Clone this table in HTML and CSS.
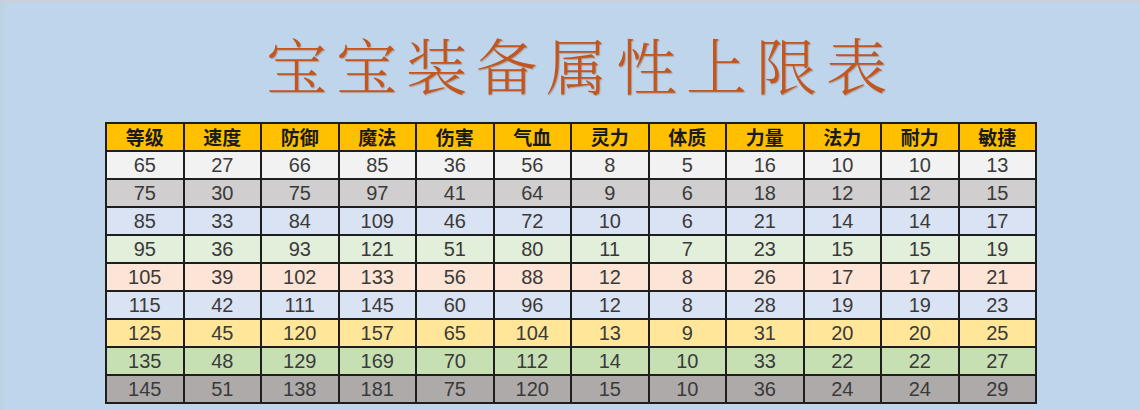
FILE: index.html
```html
<!DOCTYPE html>
<html lang="zh">
<head>
<meta charset="utf-8">
<link rel="stylesheet" href="styles.css">
</head>
<body>
<div class="page">
  <h1 class="title">宝宝装备属性上限表</h1>
  <table class="grid">
    <thead>
      <tr><th>等级</th><th>速度</th><th>防御</th><th>魔法</th><th>伤害</th><th>气血</th><th>灵力</th><th>体质</th><th>力量</th><th>法力</th><th>耐力</th><th>敏捷</th></tr>
    </thead>
    <tbody>
      <tr class="r1"><td>65</td><td>27</td><td>66</td><td>85</td><td>36</td><td>56</td><td>8</td><td>5</td><td>16</td><td>10</td><td>10</td><td>13</td></tr>
      <tr class="r2"><td>75</td><td>30</td><td>75</td><td>97</td><td>41</td><td>64</td><td>9</td><td>6</td><td>18</td><td>12</td><td>12</td><td>15</td></tr>
      <tr class="r3"><td>85</td><td>33</td><td>84</td><td>109</td><td>46</td><td>72</td><td>10</td><td>6</td><td>21</td><td>14</td><td>14</td><td>17</td></tr>
      <tr class="r4"><td>95</td><td>36</td><td>93</td><td>121</td><td>51</td><td>80</td><td>11</td><td>7</td><td>23</td><td>15</td><td>15</td><td>19</td></tr>
      <tr class="r5"><td>105</td><td>39</td><td>102</td><td>133</td><td>56</td><td>88</td><td>12</td><td>8</td><td>26</td><td>17</td><td>17</td><td>21</td></tr>
      <tr class="r6"><td>115</td><td>42</td><td>111</td><td>145</td><td>60</td><td>96</td><td>12</td><td>8</td><td>28</td><td>19</td><td>19</td><td>23</td></tr>
      <tr class="r7"><td>125</td><td>45</td><td>120</td><td>157</td><td>65</td><td>104</td><td>13</td><td>9</td><td>31</td><td>20</td><td>20</td><td>25</td></tr>
      <tr class="r8"><td>135</td><td>48</td><td>129</td><td>169</td><td>70</td><td>112</td><td>14</td><td>10</td><td>33</td><td>22</td><td>22</td><td>27</td></tr>
      <tr class="r9"><td>145</td><td>51</td><td>138</td><td>181</td><td>75</td><td>120</td><td>15</td><td>10</td><td>36</td><td>24</td><td>24</td><td>29</td></tr>
    </tbody>
  </table>
</div>
</body>
</html>
```

FILE: styles.css
```css
html, body {
  margin: 0;
  padding: 0;
}
body {
  width: 1140px;
  height: 410px;
  overflow: hidden;
  background: #bed5ec;
}
.page {
  box-sizing: border-box;
  height: 410px;
  border-top: 3px solid #c9d2dc;
  border-left: 4px solid #bcd3e4;
  padding-top: 27px;
}
.title {
  margin: 0;
  text-align: center;
  font-family: "AR PL UKai CN", "Noto Serif CJK SC", "Noto Sans CJK SC", serif;
  font-weight: 300;
  font-size: 61px;
  line-height: 68px;
  letter-spacing: 9px;
  color: #c2561f;
  text-shadow: 1px 1px 1px rgba(140, 60, 20, 0.35);
  padding-left: 18px;
}
.grid {
  margin: 24px 0 0 101px;
  border-collapse: collapse;
  table-layout: fixed;
  width: 930px;
  border: 2px solid #1e1e1e;
}
.grid th, .grid td {
  width: 77.5px;
  padding: 0;
  text-align: center;
  border: 2px solid #1e1e1e;
  box-sizing: border-box;
}
.grid th {
  height: 28px;
  background: #ffc000;
  font-family: "Noto Sans CJK SC", sans-serif;
  font-weight: 700;
  font-size: 19px;
  color: #1a1a1a;
  line-height: 26px;
}
.grid td {
  height: 28px;
  font-family: "Liberation Sans", "Noto Sans CJK SC", sans-serif;
  font-size: 20px;
  color: #3a3a3a;
  line-height: 26px;
}
.r1 td { background: #f2f2f2; }
.r2 td { background: #d0cece; }
.r3 td { background: #dae3f3; }
.r4 td { background: #e2efda; }
.r5 td { background: #fce4d6; }
.r6 td { background: #dae3f3; }
.r7 td { background: #ffe699; }
.r8 td { background: #c6e0b4; }
.r9 td { background: #aeaaaa; }
```
